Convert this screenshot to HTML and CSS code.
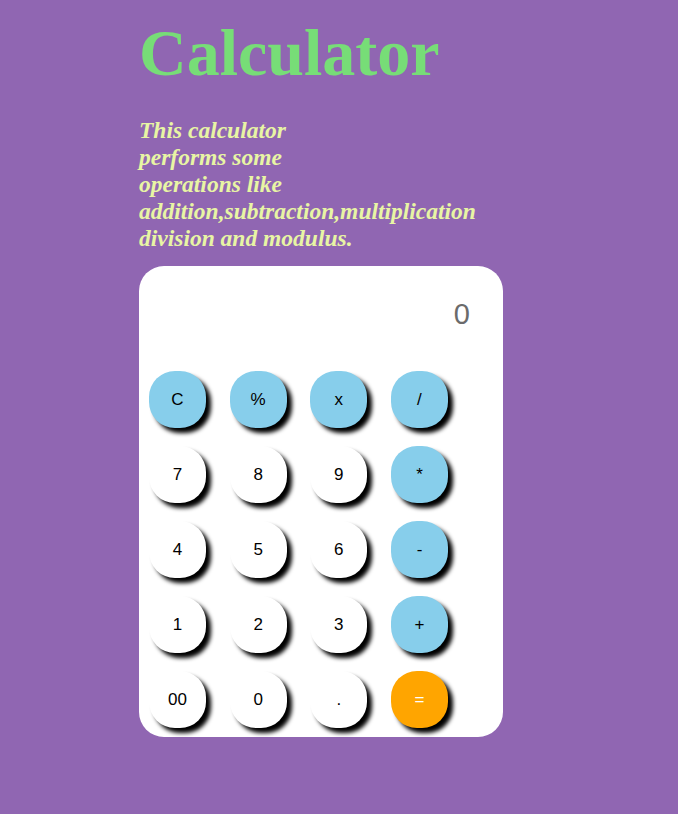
FILE: index.html
```html
<!DOCTYPE html>
<html>
<head>
<meta charset="utf-8">
<title>Calculator</title>
<link rel="stylesheet" href="styles.css">
</head>
<body>
<main class="page">
  <h1 class="title">Calculator</h1>
  <p class="intro">This calculator performs some operations like addition,subtraction,multiplication division and modulus.</p>
  <section class="calc">
    <div class="display">0</div>
    <div class="keys">
      <button class="key op">C</button>
      <button class="key op">%</button>
      <button class="key op">x</button>
      <button class="key op">/</button>
      <button class="key">7</button>
      <button class="key">8</button>
      <button class="key">9</button>
      <button class="key op">*</button>
      <button class="key">4</button>
      <button class="key">5</button>
      <button class="key">6</button>
      <button class="key op">-</button>
      <button class="key">1</button>
      <button class="key">2</button>
      <button class="key">3</button>
      <button class="key op">+</button>
      <button class="key">00</button>
      <button class="key">0</button>
      <button class="key">.</button>
      <button class="key eq">=</button>
    </div>
  </section>
</main>
</body>
</html>
```
FILE: styles.css
```css
html, body {
  margin: 0;
  padding: 0;
}
body {
  background: #9066b2;
  min-height: 814px;
}
.page {
  padding-left: 139px;
  padding-top: 15px;
}
.title {
  margin: 0 0 26px 0;
  font-family: "Liberation Serif", "Times New Roman", serif;
  font-weight: bold;
  font-size: 66px;
  color: #77dd77;
  line-height: normal;
}
.intro {
  margin: 0 0 14px 0;
  width: 220px;
  font-family: "Liberation Serif", "Times New Roman", serif;
  font-weight: bold;
  font-style: italic;
  font-size: 23.5px;
  line-height: 27px;
  color: #e8f5a4;
}
.calc {
  width: 364px;
  height: 471px;
  box-sizing: border-box;
  background: #ffffff;
  border-radius: 25px;
  padding: 0 0 9px 10px;
}
.display {
  height: 105px;
  box-sizing: border-box;
  padding: 32px 33px 0 0;
  text-align: right;
  font-family: "Liberation Sans", Arial, sans-serif;
  font-size: 29px;
  color: #6b6b6b;
}
.keys {
  display: grid;
  grid-template-columns: repeat(4, 57px);
  grid-auto-rows: 57px;
  column-gap: 23.67px;
  row-gap: 18px;
}
.key {
  border: none;
  padding: 0;
  border-radius: 26px;
  background: #ffffff;
  box-shadow: 5px 5px 4px #000000;
  font-family: "Liberation Sans", Arial, sans-serif;
  font-size: 17px;
  color: #000000;
}
.key.op {
  background: #87ceeb;
}
.key.eq {
  background: #ffa500;
  color: #ffffff;
}
```
